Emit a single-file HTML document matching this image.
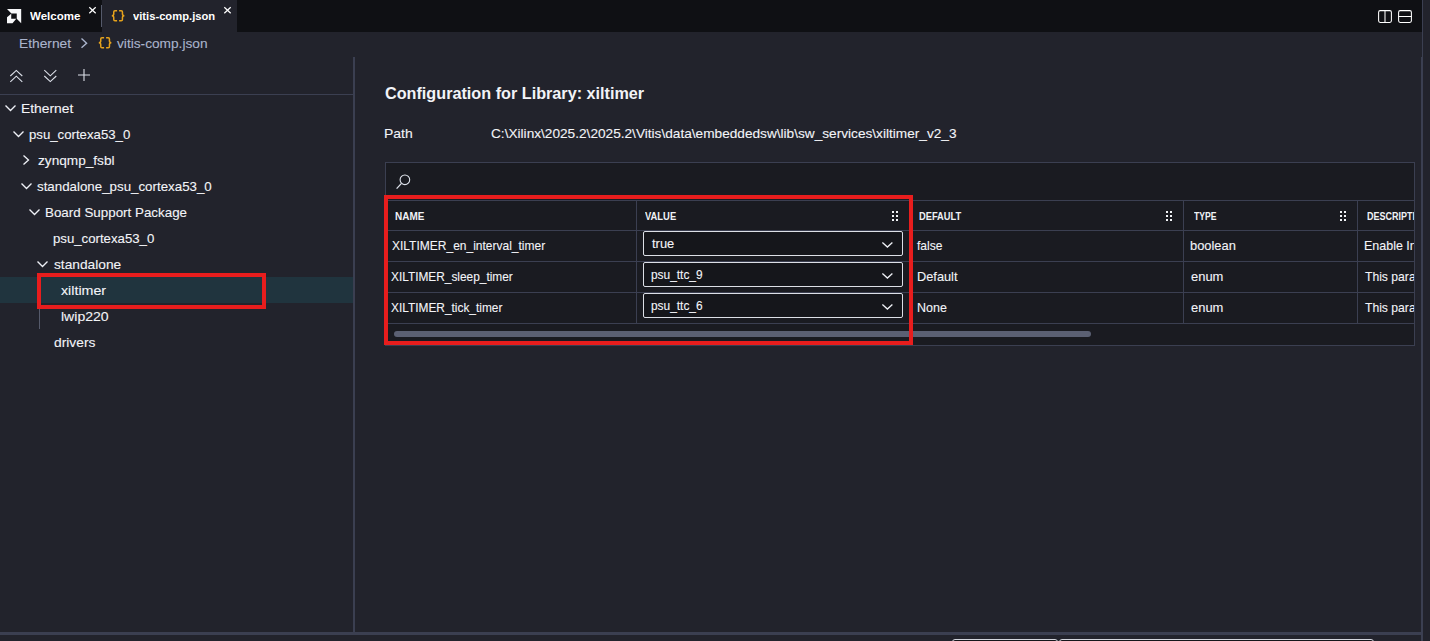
<!DOCTYPE html>
<html><head><meta charset="utf-8">
<style>
*{box-sizing:border-box;margin:0;padding:0}
html,body{width:1430px;height:641px;overflow:hidden;background:#22232c;font-family:"Liberation Sans",sans-serif;color:#e6e8ee}
.abs{position:absolute}
.t{white-space:nowrap;transform-origin:0 50%;-webkit-text-stroke:0.1px currentColor}
.line{background:#3b3f51}
.sel{border:1px solid #dcdfe6;border-radius:2px;background:#15161b;width:260px;height:25px;left:643px}
svg{overflow:visible}
.ic{stroke:#eef0f6;stroke-width:1.35;fill:none}
.ic2{stroke:#dde1ea;stroke-width:1.1;fill:none}
.dot{background:#f0f2f6;width:2px;height:2px}
</style></head><body>
<!-- tab bar -->
<div class="abs" style="left:0;top:0;width:1422px;height:32px;background:#0f1014"></div>
<div class="abs" style="left:102px;top:0;width:135px;height:32px;background:#22232c"></div>
<div class="abs" style="left:101px;top:5px;width:1px;height:22px;background:#555a6b"></div>
<!-- AMD logo -->
<svg class="abs" style="left:6.9px;top:8.9px" width="14.2" height="14.2" viewBox="0 0 14.4 14.4"><path d="M0 0H14.4V14.4L9.9 9.9V4.5H4.5Z" fill="#f6f7f9"/><path d="M0 8.4L4.3 4.9V10H9.4L5.6 14.4H0Z" fill="#f6f7f9"/></svg>
<svg class="abs" style="left:89px;top:7px" width="7" height="6.6" viewBox="0 0 7 6.6"><path d="M0.3 0.3L6.7 6.3M6.7 0.3L0.3 6.3" stroke="#fff" stroke-width="1.2" fill="none"/></svg>
<svg class="abs" style="left:224px;top:7px" width="7" height="6.6" viewBox="0 0 7 6.6"><path d="M0.3 0.3L6.7 6.3M6.7 0.3L0.3 6.3" stroke="#fff" stroke-width="1.2" fill="none"/></svg>
<!-- {} icons -->
<svg class="abs" style="left:110.9px;top:10.2px" width="14.2" height="11.4" viewBox="0 0 14.2 11.4"><path d="M6.1 0.75H4Q2.75 0.75 2.75 2V4Q2.75 5.7 0.8 5.7Q2.75 5.7 2.75 7.4V9.4Q2.75 10.65 4 10.65H6.1M8.1 0.75H10.2Q11.45 0.75 11.45 2V4Q11.45 5.7 13.4 5.7Q11.45 5.7 11.45 7.4V9.4Q11.45 10.65 10.2 10.65H8.1" stroke="#e5a21c" stroke-width="1.5" fill="none"/></svg>
<svg class="abs" style="left:97.9px;top:37.3px" width="14.2" height="11.4" viewBox="0 0 14.2 11.4"><path d="M6.1 0.75H4Q2.75 0.75 2.75 2V4Q2.75 5.7 0.8 5.7Q2.75 5.7 2.75 7.4V9.4Q2.75 10.65 4 10.65H6.1M8.1 0.75H10.2Q11.45 0.75 11.45 2V4Q11.45 5.7 13.4 5.7Q11.45 5.7 11.45 7.4V9.4Q11.45 10.65 10.2 10.65H8.1" stroke="#e5a21c" stroke-width="1.5" fill="none"/></svg>
<!-- right icons -->
<svg class="abs" style="left:1378px;top:10px" width="14" height="13" viewBox="0 0 14 13"><rect x="0.6" y="0.6" width="12.8" height="11.8" rx="1.6" fill="none" stroke="#fff" stroke-width="1.05"/><path d="M7 0.6V12.4" stroke="#fff" stroke-width="1.05"/></svg>
<svg class="abs" style="left:1398px;top:10px" width="14" height="13" viewBox="0 0 14 13"><rect x="0.6" y="0.6" width="12.8" height="11.8" rx="1.6" fill="none" stroke="#fff" stroke-width="1.05"/><path d="M0.6 6.5H13.4" stroke="#fff" stroke-width="1.05"/></svg>
<!-- breadcrumb chevron -->
<svg class="abs" style="left:80.7px;top:37.8px" width="6.5" height="10.3" viewBox="0 0 6.5 10.3"><path d="M0.5 0.5L5.6 5.15L0.5 9.8" stroke="#aab4cc" stroke-width="1.4" fill="none"/></svg>

<!-- frame lines -->
<div class="abs line" style="left:353px;top:57px;width:2px;height:575px"></div>
<div class="abs line" style="left:0;top:94px;width:353px;height:1px"></div>
<div class="abs line" style="left:1422px;top:0;width:1px;height:641px"></div>
<div class="abs line" style="left:1421px;top:57px;width:2px;height:584px"></div>
<div class="abs line" style="left:0;top:632px;width:1421px;height:3px"></div>
<!-- bottom widgets -->
<div class="abs" style="left:952px;top:639px;width:106px;height:10px;border:1px solid #d2d5dd;border-radius:3px;background:#15161b"></div>
<div class="abs" style="left:1059px;top:639px;width:315px;height:10px;border:1px solid #d2d5dd;border-radius:3px;background:#15161b"></div>

<!-- toolbar icons -->
<svg class="abs" style="left:10px;top:69.6px" width="12.6" height="12" viewBox="0 0 12.6 12"><path class="ic2" d="M0.3 6L6.3 0.4L12.3 6M0.3 11.8L6.3 6.2L12.3 11.8"/></svg>
<svg class="abs" style="left:43.5px;top:69.6px" width="12.6" height="12" viewBox="0 0 12.6 12"><path class="ic2" d="M0.3 0.2L6.3 5.8L12.3 0.2M0.3 6L6.3 11.6L12.3 6"/></svg>
<svg class="abs" style="left:78px;top:69.4px" width="12" height="12" viewBox="0 0 12 12"><path class="ic2" d="M6 0V12M0 6H12"/></svg>

<!-- selected row -->
<div class="abs" style="left:0;top:277px;width:353px;height:26px;background:#20343e"></div>
<div class="abs" style="left:39px;top:277px;width:1px;height:52px;background:#555a6b"></div>

<!-- tree chevrons -->
<svg class="abs" style="left:5px;top:105.3px" width="11" height="6.2" viewBox="0 0 11 6.2"><path class="ic" d="M0.5 0.5L5.5 5.5L10.5 0.5"/></svg>
<svg class="abs" style="left:13px;top:131.3px" width="11" height="6.2" viewBox="0 0 11 6.2"><path class="ic" d="M0.5 0.5L5.5 5.5L10.5 0.5"/></svg>
<svg class="abs" style="left:23.2px;top:155.4px" width="6.4" height="10" viewBox="0 0 6.4 10"><path class="ic" d="M0.5 0.5L5.5 5L0.5 9.5"/></svg>
<svg class="abs" style="left:21px;top:183.3px" width="11" height="6.2" viewBox="0 0 11 6.2"><path class="ic" d="M0.5 0.5L5.5 5.5L10.5 0.5"/></svg>
<svg class="abs" style="left:29px;top:209.3px" width="11" height="6.2" viewBox="0 0 11 6.2"><path class="ic" d="M0.5 0.5L5.5 5.5L10.5 0.5"/></svg>
<svg class="abs" style="left:37px;top:261.3px" width="11" height="6.2" viewBox="0 0 11 6.2"><path class="ic" d="M0.5 0.5L5.5 5.5L10.5 0.5"/></svg>

<!-- table -->
<div class="abs" style="left:385px;top:162px;width:1030px;height:184px;background:#1a1b21;border:1px solid #3b3f51"></div>
<svg class="abs" style="left:396px;top:174px" width="15" height="15" viewBox="0 0 15 15"><circle cx="8.9" cy="5.8" r="4.8" stroke="#dfe3ec" stroke-width="1.1" fill="none"/><path d="M5.5 9.4L0.6 14.6" stroke="#dfe3ec" stroke-width="1.3"/></svg>
<div class="abs line" style="left:386px;top:200px;width:1028px;height:1px"></div>
<div class="abs line" style="left:386px;top:230px;width:1028px;height:1px"></div>
<div class="abs line" style="left:386px;top:261px;width:1028px;height:1px"></div>
<div class="abs line" style="left:386px;top:292px;width:1028px;height:1px"></div>
<div class="abs line" style="left:386px;top:323px;width:1028px;height:1px"></div>
<div class="abs line" style="left:636px;top:200px;width:1px;height:124px"></div>
<div class="abs line" style="left:910px;top:200px;width:1px;height:124px"></div>
<div class="abs line" style="left:1183px;top:200px;width:1px;height:124px"></div>
<div class="abs line" style="left:1357px;top:200px;width:1px;height:124px"></div>

<!-- drag handles -->
<div class="abs dot" style="left:892px;top:211px"></div><div class="abs dot" style="left:896px;top:211px"></div>
<div class="abs dot" style="left:892px;top:215px"></div><div class="abs dot" style="left:896px;top:215px"></div>
<div class="abs dot" style="left:892px;top:219px"></div><div class="abs dot" style="left:896px;top:219px"></div>
<div class="abs dot" style="left:1166px;top:211px"></div><div class="abs dot" style="left:1170px;top:211px"></div>
<div class="abs dot" style="left:1166px;top:215px"></div><div class="abs dot" style="left:1170px;top:215px"></div>
<div class="abs dot" style="left:1166px;top:219px"></div><div class="abs dot" style="left:1170px;top:219px"></div>
<div class="abs dot" style="left:1340px;top:211px"></div><div class="abs dot" style="left:1344px;top:211px"></div>
<div class="abs dot" style="left:1340px;top:215px"></div><div class="abs dot" style="left:1344px;top:215px"></div>
<div class="abs dot" style="left:1340px;top:219px"></div><div class="abs dot" style="left:1344px;top:219px"></div>

<!-- selects -->
<div class="abs sel" style="top:231px"></div>
<div class="abs sel" style="top:262px"></div>
<div class="abs sel" style="top:293px"></div>
<svg class="abs" style="left:882.2px;top:241.6px" width="10.8" height="5.6" viewBox="0 0 10.8 5.6"><path d="M0.4 0.4L5.4 5L10.4 0.4" stroke="#eef0f5" stroke-width="1.3" fill="none"/></svg>
<svg class="abs" style="left:882.2px;top:272.6px" width="10.8" height="5.6" viewBox="0 0 10.8 5.6"><path d="M0.4 0.4L5.4 5L10.4 0.4" stroke="#eef0f5" stroke-width="1.3" fill="none"/></svg>
<svg class="abs" style="left:882.2px;top:303.6px" width="10.8" height="5.6" viewBox="0 0 10.8 5.6"><path d="M0.4 0.4L5.4 5L10.4 0.4" stroke="#eef0f5" stroke-width="1.3" fill="none"/></svg>

<!-- scrollbar -->
<div class="abs" style="left:394px;top:331px;width:697px;height:6px;border-radius:3px;background:#5b6073"></div>

<div class="abs t" style="left:30.00px;top:6.00px;font:bold 11.5px/20px 'Liberation Sans',sans-serif;color:#ffffff;transform:scaleX(1.0040);-webkit-text-stroke:0">Welcome</div>
<div class="abs t" style="left:133.48px;top:6.00px;font:bold 11.5px/20px 'Liberation Sans',sans-serif;color:#ffffff;transform:scaleX(0.9740);-webkit-text-stroke:0">vitis-comp.json</div>
<div class="abs t" style="left:19.34px;top:34.00px;font:normal 13px/20px 'Liberation Sans',sans-serif;color:#aab4cc;transform:scaleX(1.0604)">Ethernet</div>
<div class="abs t" style="left:117.37px;top:34.00px;font:normal 13px/20px 'Liberation Sans',sans-serif;color:#aab4cc;transform:scaleX(1.0529)">vitis-comp.json</div>
<div class="abs t" style="left:21.24px;top:99.00px;font:normal 13px/20px 'Liberation Sans',sans-serif;color:#f3f4f8;transform:scaleX(1.0646)">Ethernet</div>
<div class="abs t" style="left:29.18px;top:125.00px;font:normal 13px/20px 'Liberation Sans',sans-serif;color:#f3f4f8;transform:scaleX(1.0153)">psu_cortexa53_0</div>
<div class="abs t" style="left:37.53px;top:151.00px;font:normal 13px/20px 'Liberation Sans',sans-serif;color:#f3f4f8;transform:scaleX(1.0482)">zynqmp_fsbl</div>
<div class="abs t" style="left:37.44px;top:177.00px;font:normal 13px/20px 'Liberation Sans',sans-serif;color:#f3f4f8;transform:scaleX(1.0245)">standalone_psu_cortexa53_0</div>
<div class="abs t" style="left:45.37px;top:203.00px;font:normal 13px/20px 'Liberation Sans',sans-serif;color:#f3f4f8;transform:scaleX(1.0288)">Board Support Package</div>
<div class="abs t" style="left:53.08px;top:229.00px;font:normal 13px/20px 'Liberation Sans',sans-serif;color:#f3f4f8;transform:scaleX(1.0153)">psu_cortexa53_0</div>
<div class="abs t" style="left:53.63px;top:255.00px;font:normal 13px/20px 'Liberation Sans',sans-serif;color:#f3f4f8;transform:scaleX(1.0562)">standalone</div>
<div class="abs t" style="left:61.46px;top:281.00px;font:normal 13px/20px 'Liberation Sans',sans-serif;color:#f3f4f8;transform:scaleX(1.0960)">xiltimer</div>
<div class="abs t" style="left:60.72px;top:307.00px;font:normal 13px/20px 'Liberation Sans',sans-serif;color:#f3f4f8;transform:scaleX(1.0799)">lwip220</div>
<div class="abs t" style="left:53.68px;top:333.00px;font:normal 13px/20px 'Liberation Sans',sans-serif;color:#f3f4f8;transform:scaleX(1.0629)">drivers</div>
<div class="abs t" style="left:384.97px;top:84.00px;font:bold 16px/20px 'Liberation Sans',sans-serif;color:#f2f3f7;transform:scaleX(1.0122);-webkit-text-stroke:0">Configuration for Library: xiltimer</div>
<div class="abs t" style="left:384.43px;top:124.00px;font:normal 13px/20px 'Liberation Sans',sans-serif;color:#f3f4f8;transform:scaleX(1.0720)">Path</div>
<div class="abs t" style="left:490.95px;top:124.00px;font:normal 13px/20px 'Liberation Sans',sans-serif;color:#f3f4f8;transform:scaleX(1.0498)">C:\Xilinx\2025.2\2025.2\Vitis\data\embeddedsw\lib\sw_services\xiltimer_v2_3</div>
<div class="abs t" style="left:394.78px;top:207.00px;font:bold 10px/20px 'Liberation Sans',sans-serif;color:#f0f2f6;transform:scaleX(0.9972);-webkit-text-stroke:0">NAME</div>
<div class="abs t" style="left:645.38px;top:207.00px;font:bold 10px/20px 'Liberation Sans',sans-serif;color:#f0f2f6;transform:scaleX(0.9400);-webkit-text-stroke:0">VALUE</div>
<div class="abs t" style="left:919.42px;top:207.00px;font:bold 10px/20px 'Liberation Sans',sans-serif;color:#f0f2f6;transform:scaleX(0.9307);-webkit-text-stroke:0">DEFAULT</div>
<div class="abs t" style="left:1193.60px;top:207.00px;font:bold 10px/20px 'Liberation Sans',sans-serif;color:#f0f2f6;transform:scaleX(0.8654);-webkit-text-stroke:0">TYPE</div>
<div class="abs" style="left:0;top:207.00px;width:1414px;height:20px;overflow:hidden"><div class="abs t" style="left:1366.63px;top:207.00px;font:bold 10px/20px 'Liberation Sans',sans-serif;color:#f0f2f6;transform:scaleX(0.8998);-webkit-text-stroke:0;top:0">DESCRIPTION</div></div>
<div class="abs t" style="left:391.75px;top:236.00px;font:normal 13px/20px 'Liberation Sans',sans-serif;color:#f3f4f8;transform:scaleX(0.9231)">XILTIMER_en_interval_timer</div>
<div class="abs t" style="left:391.35px;top:267.00px;font:normal 13px/20px 'Liberation Sans',sans-serif;color:#f3f4f8;transform:scaleX(0.9126)">XILTIMER_sleep_timer</div>
<div class="abs t" style="left:391.35px;top:298.00px;font:normal 13px/20px 'Liberation Sans',sans-serif;color:#f3f4f8;transform:scaleX(0.9141)">XILTIMER_tick_timer</div>
<div class="abs t" style="left:651.83px;top:234.00px;font:normal 12px/20px 'Liberation Sans',sans-serif;color:#f3f4f8;transform:scaleX(1.0766)">true</div>
<div class="abs t" style="left:651.37px;top:265.00px;font:normal 12px/20px 'Liberation Sans',sans-serif;color:#f3f4f8;transform:scaleX(0.9905)">psu_ttc_9</div>
<div class="abs t" style="left:651.37px;top:296.00px;font:normal 12px/20px 'Liberation Sans',sans-serif;color:#f3f4f8;transform:scaleX(0.9907)">psu_ttc_6</div>
<div class="abs t" style="left:917.03px;top:236.00px;font:normal 13px/20px 'Liberation Sans',sans-serif;color:#f3f4f8;transform:scaleX(0.9286)">false</div>
<div class="abs t" style="left:916.82px;top:267.00px;font:normal 13px/20px 'Liberation Sans',sans-serif;color:#f3f4f8;transform:scaleX(0.9825)">Default</div>
<div class="abs t" style="left:916.84px;top:298.00px;font:normal 13px/20px 'Liberation Sans',sans-serif;color:#f3f4f8;transform:scaleX(0.9608)">None</div>
<div class="abs t" style="left:1190.11px;top:236.00px;font:normal 13px/20px 'Liberation Sans',sans-serif;color:#f3f4f8;transform:scaleX(0.9912)">boolean</div>
<div class="abs t" style="left:1190.71px;top:267.00px;font:normal 13px/20px 'Liberation Sans',sans-serif;color:#f3f4f8;transform:scaleX(0.9966)">enum</div>
<div class="abs t" style="left:1190.71px;top:298.00px;font:normal 13px/20px 'Liberation Sans',sans-serif;color:#f3f4f8;transform:scaleX(0.9966)">enum</div>
<div class="abs" style="left:0;top:236.00px;width:1414px;height:20px;overflow:hidden"><div class="abs t" style="left:1363.94px;top:236.00px;font:normal 13px/20px 'Liberation Sans',sans-serif;color:#f3f4f8;transform:scaleX(0.9600);top:0">Enable Interval</div></div>
<div class="abs" style="left:0;top:267.00px;width:1414px;height:20px;overflow:hidden"><div class="abs t" style="left:1364.83px;top:267.00px;font:normal 13px/20px 'Liberation Sans',sans-serif;color:#f3f4f8;transform:scaleX(0.9344);top:0">This parameter</div></div>
<div class="abs" style="left:0;top:298.00px;width:1414px;height:20px;overflow:hidden"><div class="abs t" style="left:1364.83px;top:298.00px;font:normal 13px/20px 'Liberation Sans',sans-serif;color:#f3f4f8;transform:scaleX(0.9344);top:0">This parameter</div></div>

<!-- red boxes -->
<div class="abs" style="left:37px;top:273px;width:229px;height:35.5px;border:4px solid #e81d1d"></div>
<div class="abs" style="left:384px;top:195px;width:529px;height:150px;border:4px solid #e81d1d"></div>
</body></html>
